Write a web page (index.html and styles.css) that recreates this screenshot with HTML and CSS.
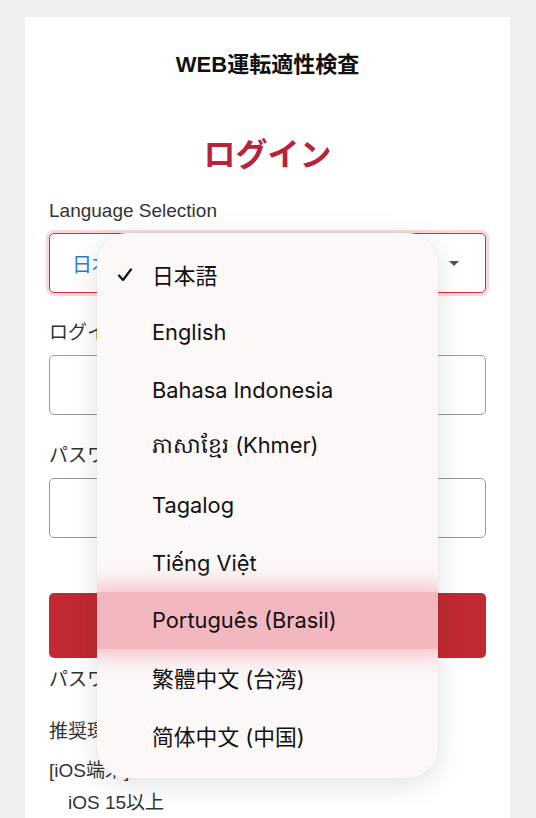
FILE: index.html
```html
<!DOCTYPE html>
<html lang="ja">
<head>
    <meta charset="UTF-8">
    <meta name="viewport" content="width=device-width, initial-scale=1.0">
    <title>WEB運転適性検査 ログイン</title>
    <link rel="stylesheet" href="styles.css">
</head>
<body>
    <div class="card">
        <h1 class="site-title">WEB運転適性検査</h1>
        <h2 class="page-title">ログイン</h2>

        <form class="login-form">
            <label class="field-label" for="lang">Language Selection</label>
            <div class="select-box" id="lang">
                <span class="select-value">日本語</span>
                <span class="caret"></span>
            </div>

            <label class="field-label" for="login-id">ログインID</label>
            <input class="text-input" type="text" id="login-id">

            <label class="field-label" for="password">パスワード</label>
            <input class="text-input" type="password" id="password">

            <button class="submit-btn" type="button">ログイン</button>
        </form>

        <p class="forgot">パスワードを忘れた方はこちら</p>
        <p class="env-title">推奨環境</p>
        <p class="env-item">[iOS端末]</p>
        <p class="env-sub">iOS 15以上</p>

        <ul class="lang-menu">
            <li class="lang-option selected">
                <svg class="check" width="16" height="16" viewBox="0 0 16 16">
                    <path d="M2 8.5 L6 13 L14 2.5" fill="none" stroke="#111" stroke-width="2.2" stroke-linecap="round" stroke-linejoin="round"/>
                </svg>
                日本語
            </li>
            <li class="lang-option">English</li>
            <li class="lang-option">Bahasa Indonesia</li>
            <li class="lang-option">ភាសាខ្មែរ (Khmer)</li>
            <li class="lang-option">Tagalog</li>
            <li class="lang-option">Tiếng Việt</li>
            <li class="lang-option hover">Português (Brasil)</li>
            <li class="lang-option">繁體中文 (台湾)</li>
            <li class="lang-option">简体中文 (中国)</li>
        </ul>
    </div>
</body>
</html>
```

FILE: styles.css
```css
body {
    margin: 0;
    background-color: #efefef;
    font-family: "Liberation Sans", Arial, "Noto Sans CJK JP", sans-serif;
    color: #222;
}

.card {
    position: relative;
    background-color: #fff;
    margin: 17px 26px 0 25px;
    padding: 33px 24px 0;
    height: 801px;
    box-sizing: border-box;
    overflow: hidden;
}

.site-title {
    margin: 0;
    text-align: center;
    font-size: 22px;
    line-height: 30px;
    font-weight: bold;
    color: #111;
    font-family: "Liberation Sans", "Noto Sans CJK JP", sans-serif;
}

.page-title {
    margin: 50px 0 0;
    text-align: center;
    font-size: 32px;
    line-height: 44px;
    font-weight: bold;
    color: #b8233a;
    font-family: "Noto Sans CJK JP", sans-serif;
}

.login-form {
    display: flex;
    flex-direction: column;
    margin-top: 25px;
}

.field-label {
    font-size: 19px;
    line-height: 24px;
    color: #333;
    font-family: "Liberation Sans", "Noto Sans CJK JP", sans-serif;
    margin-bottom: 10px;
}

.select-box {
    height: 60px;
    box-sizing: border-box;
    border: 1.5px solid #c8323f;
    border-radius: 5px;
    box-shadow: 0 0 0 3px rgba(226, 120, 130, 0.28);
    display: flex;
    align-items: center;
    justify-content: space-between;
    padding: 0 24px 0 22px;
    margin-bottom: 28px;
}

.select-value {
    color: #2f7ad8;
    font-size: 20px;
    font-family: "Noto Sans CJK JP", sans-serif;
}

.caret {
    width: 0;
    height: 0;
    border-left: 5px solid transparent;
    border-right: 5px solid transparent;
    border-top: 5px solid #555;
    margin-right: 2px;
}

.text-input {
    height: 60px;
    box-sizing: border-box;
    border: 1px solid #9a9a9a;
    border-radius: 5px;
    margin: 0 0 29px;
    padding: 0 12px;
    font-size: 17px;
}

.submit-btn {
    margin-top: 26px;
    height: 65px;
    border: none;
    border-radius: 5px;
    background-color: #c12a31;
    color: #fff;
    font-size: 20px;
    font-weight: bold;
    font-family: "Noto Sans CJK JP", sans-serif;
}

.forgot,
.env-title,
.env-item,
.env-sub {
    margin: 0;
    font-size: 19px;
    line-height: 24px;
    color: #333;
    font-family: "Liberation Sans", "Noto Sans CJK JP", sans-serif;
}

.forgot {
    margin-top: 10px;
}

.env-title {
    margin-top: 28px;
}

.env-item {
    margin-top: 15px;
}

.env-sub {
    margin-top: 8px;
    padding-left: 19px;
}

/* open dropdown */
.lang-menu {
    position: absolute;
    left: 72px;
    top: 216px;
    width: 341px;
    height: 545px;
    box-sizing: border-box;
    margin: 0;
    padding: 13px 0 0;
    list-style: none;
    background-color: #fcf8f8;
    border-radius: 30px;
    box-shadow: 0 6px 30px rgba(0, 0, 0, 0.12), 0 0 1px rgba(0, 0, 0, 0.15);
    overflow: hidden;
}

.lang-option {
    position: relative;
    height: 57.6px;
    display: flex;
    align-items: center;
    padding-left: 55px;
    font-size: 21.8px;
    color: #111;
    font-family: Inter, "Noto Sans", "Noto Sans CJK TC", sans-serif;
}

.lang-option .check {
    position: absolute;
    left: 20px;
    top: 21px;
}

.lang-option.hover {
    background-color: #f3b7bf;
    box-shadow: 0 0 18px 8px rgba(243, 183, 191, 0.8);
}
```
